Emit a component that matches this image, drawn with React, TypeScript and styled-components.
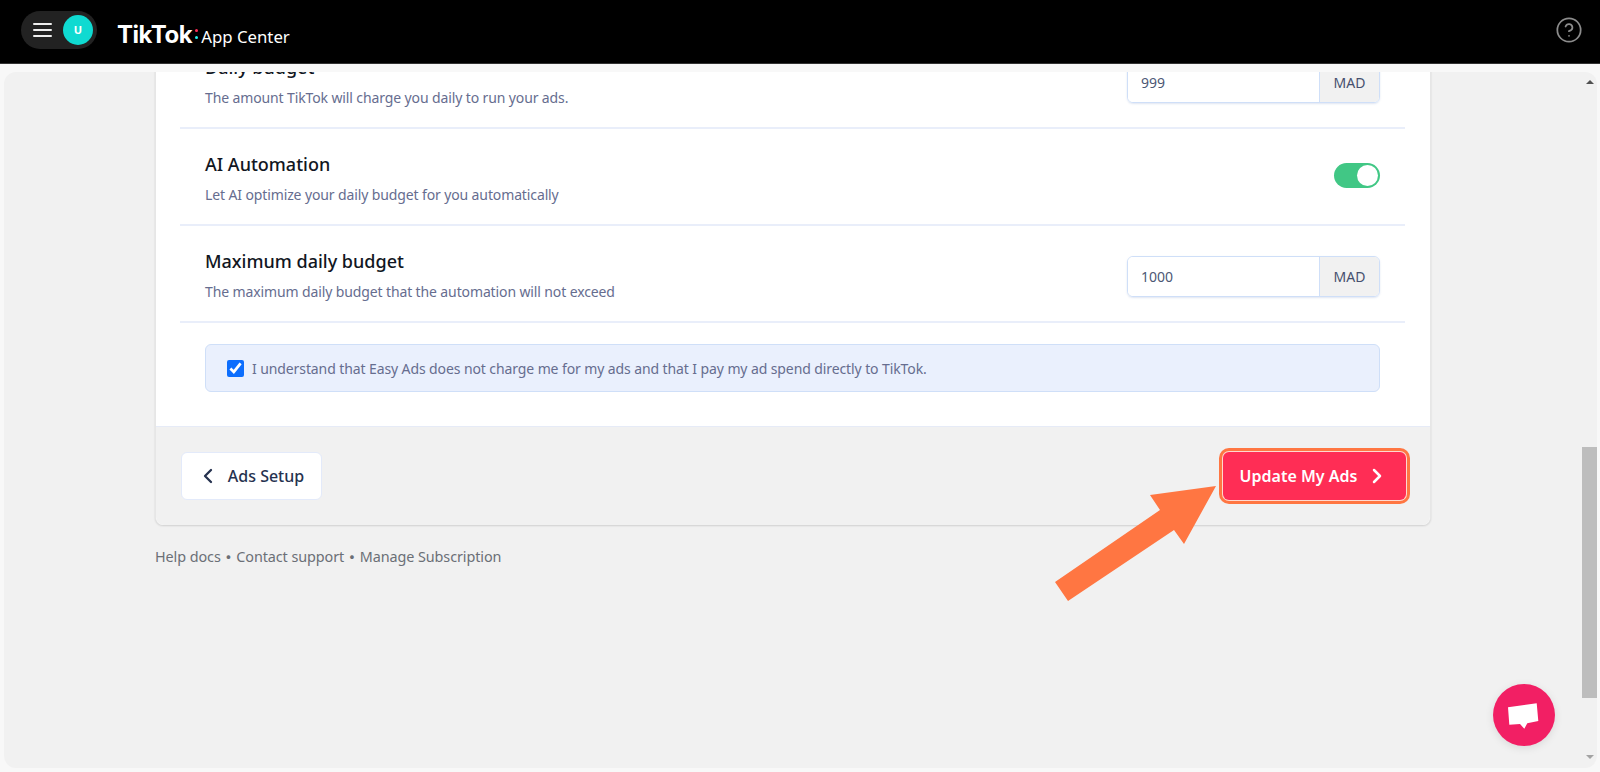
import React from "react";
import styled, { createGlobalStyle } from "styled-components";
import { CircleHelp, ChevronLeft, ChevronRight } from "lucide-react";

const Global = createGlobalStyle`
  html, body { margin: 0; padding: 0; height: 100%; overflow: hidden; background: #f8f8f8; }
  body { font-family: "Noto Sans", "Open Sans", Arial, sans-serif; }
  * { box-sizing: border-box; }
`;

const Page = styled.div`
  position: relative;
  width: 1600px;
  height: 772px;
  display: flex;
  flex-direction: column;
  overflow: hidden;
`;
const Header = styled.header`
  height: 64px;
  flex: none;
  background: #000;
  border-bottom: 1px solid #333;
  display: flex;
  align-items: center;
  padding: 0 17px 4px 21px;
`;
const MenuPill = styled.div`
  width: 76px;
  height: 38px;
  border-radius: 19px;
  background: #222;
  display: flex;
  align-items: center;
  padding: 0 4px 0 12px;
  justify-content: space-between;
`;
const Burger = styled.div`
  width: 19px;
  height: 14px;
  display: flex;
  flex-direction: column;
  justify-content: space-between;
  & > i { display: block; height: 2px; background: #eee; border-radius: 1px; }
`;
const Avatar = styled.div`
  width: 30px;
  height: 30px;
  border-radius: 50%;
  background: #0fdad1;
  color: #fff;
  display: flex;
  align-items: center;
  justify-content: center;
  font-size: 11px;
  font-weight: 700;
`;
const Logo = styled.div`
  margin-left: 20px;
  display: flex;
  align-items: baseline;
  color: #fff;
  font-family: Inter, sans-serif;
  margin-top: 9px;
`;
const LogoMark = styled.span`
  font-size: 24px;
  font-weight: 700;
  letter-spacing: -0.45px;
`;
const LogoDots = styled.span`
  display: inline-flex;
  flex-direction: column;
  gap: 4px;
  margin: 0 3px 0 3px;
  align-self: center;
  & > i { width: 3px; height: 3px; display: block; border-radius: 50%; }
  & > i:first-child { background: #fe2c55; }
  & > i:last-child { background: #25f4ee; }
`;
const LogoSub = styled.span`
  font-family: "Noto Sans", sans-serif;
  font-size: 16.8px;
  font-weight: 400;
`;
const HelpButton = styled.div`
  margin-left: auto;
  color: #8c8c8c;
  display: flex;
`;
const Body = styled.div`
  flex: 1;
  min-height: 0;
  padding: 8px 3px 4px 4px;
  display: flex;
`;
const Panel = styled.main`
  flex: 1;
  min-width: 0;
  background: #f1f1f1;
  border-radius: 12px;
  overflow: hidden;
  display: flex;
`;
const Scroller = styled.div`
  flex: 1;
  min-width: 0;
  overflow: hidden;
`;
const Column = styled.div`
  width: 1276px;
  margin: -40px auto 0;
`;
const Card = styled.section`
  background: #fff;
  border-radius: 0 0 8px 8px;
  box-shadow: 0 1px 2px rgba(0, 0, 0, 0.14);
  border-left: 1px solid #e6e6e6;
  border-right: 1px solid #e6e6e6;
`;
const CardBody = styled.div`
  padding: 0 25px 34px 24px;
`;
const Row = styled.div`
  height: 97px;
  border-bottom: 2px solid #e9eefa;
  padding: 3px 25px 0 25px;
  display: flex;
  align-items: center;
  justify-content: space-between;
`;
const RowText = styled.div`
  display: flex;
  flex-direction: column;
  gap: 9px;
`;
const RowTitle = styled.div`
  font-size: 18px;
  line-height: 24px;
  font-weight: 500;
  color: #111622;
`;
const RowDesc = styled.div`
  font-size: 14px;
  line-height: 20px;
  letter-spacing: -0.12px;
  color: #666d8f;
`;
const InputGroup = styled.div`
  width: 253px;
  height: 41px;
  margin-top: 2px;
  border: 1.5px solid #cfdff8;
  border-radius: 6px;
  display: flex;
  overflow: hidden;
  box-shadow: 0 1px 2px rgba(80, 110, 180, 0.18);
`;
const NumberInput = styled.input`
  flex: 1;
  min-width: 0;
  border: 0;
  outline: 0;
  padding: 0 13px;
  font: 14px "Noto Sans", sans-serif;
  color: #4d5875;
  background: #fff;
`;
const Addon = styled.div`
  width: 60px;
  background: #f1f1f1;
  border-left: 1.5px solid #cfdff8;
  display: flex;
  align-items: center;
  justify-content: center;
  font-size: 14px;
  color: #46506e;
`;
const Toggle = styled.div`
  width: 46px;
  height: 25px;
  margin-bottom: 5px;
  border-radius: 13px;
  background: #41c785;
  display: flex;
  align-items: center;
  justify-content: flex-end;
  padding: 0 2px;
  & > i { display: block; width: 21px; height: 21px; border-radius: 50%; background: #fff; }
`;
const Notice = styled.label`
  margin: 21px 25px 0 25px;
  height: 48px;
  border: 1.5px solid #cfdff8;
  border-radius: 6px;
  background: #eaf0fd;
  display: flex;
  align-items: center;
  padding: 0 21px;
  gap: 8px;
  font-size: 14px;
  letter-spacing: -0.1px;
  color: #666d8f;
`;
const Check = styled.input`
  width: 17px;
  height: 17px;
  margin: 0;
  accent-color: #0d6efd;
`;
const CardFooter = styled.div`
  height: 99px;
  background: #f1f1f1;
  border-top: 1px solid #e6ebf7;
  border-radius: 0 0 8px 8px;
  padding: 0 24px 0 25px;
  display: flex;
  align-items: center;
  justify-content: space-between;
`;
const BackButton = styled.button`
  width: 141px;
  height: 48px;
  background: #fff;
  border: 1.5px solid #e3eafa;
  border-radius: 6px;
  display: flex;
  align-items: center;
  justify-content: center;
  gap: 8px;
  font: 500 16px "Noto Sans", sans-serif;
  color: #26324f;
  padding: 0 3px 0 0;
`;
const PrimaryButton = styled.button`
  width: 183px;
  height: 48px;
  background: #ff2d55;
  border: 0;
  border-radius: 6px;
  box-shadow: 0 0 0 1px #ffd9cf, 0 0 0 4px #ff7642;
  display: flex;
  align-items: center;
  justify-content: center;
  gap: 8px;
  font: 600 16px "Noto Sans", sans-serif;
  color: #fff;
  padding: 0;
`;
const LinksRow = styled.nav`
  margin-top: 21px;
  font-size: 14.4px;
  line-height: 22px;
  letter-spacing: -0.08px;
  color: #6b6f76;
  display: flex;
`;
const Separator = styled.span`
  font-family: "Noto Sans CJK JP", sans-serif;
  font-weight: 700;
  width: 15.5px;
  text-align: center;
`;
const ScrollTrack = styled.div`
  width: 15px;
  flex: none;
  display: flex;
  flex-direction: column;
  align-items: center;
  padding: 8px 0 9px;
`;
const ArrowUp = styled.i`
  width: 0;
  height: 0;
  border: 4px solid transparent;
  border-top: 0;
  border-bottom: 4px solid #505050;
`;
const ArrowDown = styled.i`
  width: 0;
  height: 0;
  border: 4px solid transparent;
  border-bottom: 0;
  border-top: 4px solid #a3a3a3;
`;
const Thumb = styled.div`
  width: 100%;
  height: 251px;
  margin-top: auto;
  margin-bottom: 57px;
  background: #bdbdbd;
`;
const Annotation = styled.svg`
  position: absolute;
  left: 0;
  top: 0;
  pointer-events: none;
`;
const ChatButton = styled.div`
  position: absolute;
  left: 1493px;
  top: 684px;
  width: 62px;
  height: 62px;
  border-radius: 50%;
  background: #f21f64;
  box-shadow: 0 2px 8px rgba(0, 0, 0, 0.1);
`;

const BudgetInput = ({ value }: { value: string }) => (
  <InputGroup>
    <NumberInput defaultValue={value} />
    <Addon>MAD</Addon>
  </InputGroup>
);

const SettingRow = ({ title, desc, children }: { title: string; desc: string; children: React.ReactNode }) => (
  <Row>
    <RowText>
      <RowTitle>{title}</RowTitle>
      <RowDesc>{desc}</RowDesc>
    </RowText>
    {children}
  </Row>
);

export default function App() {
  return (
    <Page>
      <Global />
      <Header>
        <MenuPill>
          <Burger><i /><i /><i /></Burger>
          <Avatar>U</Avatar>
        </MenuPill>
        <Logo>
          <LogoMark>TikTok</LogoMark>
          <LogoDots><i /><i /></LogoDots>
          <LogoSub>App Center</LogoSub>
        </Logo>
        <HelpButton><CircleHelp size={28} strokeWidth={1.5} /></HelpButton>
      </Header>
      <Body>
        <Panel>
          <Scroller>
            <Column>
              <Card>
                <CardBody>
                  <SettingRow title="Daily budget" desc="The amount TikTok will charge you daily to run your ads.">
                    <BudgetInput value="999" />
                  </SettingRow>
                  <SettingRow title="AI Automation" desc="Let AI optimize your daily budget for you automatically">
                    <Toggle><i /></Toggle>
                  </SettingRow>
                  <SettingRow title="Maximum daily budget" desc="The maximum daily budget that the automation will not exceed">
                    <BudgetInput value="1000" />
                  </SettingRow>
                  <Notice>
                    <Check type="checkbox" defaultChecked />
                    I understand that Easy Ads does not charge me for my ads and that I pay my ad spend directly to TikTok.
                  </Notice>
                </CardBody>
                <CardFooter>
                  <BackButton><ChevronLeft size={24} strokeWidth={2.3} />Ads Setup</BackButton>
                  <PrimaryButton>Update My Ads<ChevronRight size={24} strokeWidth={2.5} /></PrimaryButton>
                </CardFooter>
              </Card>
              <LinksRow>
                <span>Help docs</span><Separator>・</Separator><span>Contact support</span><Separator>・</Separator><span>Manage Subscription</span>
              </LinksRow>
            </Column>
          </Scroller>
          <ScrollTrack>
            <ArrowUp />
            <Thumb />
            <ArrowDown />
          </ScrollTrack>
        </Panel>
      </Body>
      <Annotation width="1600" height="772" viewBox="0 0 1600 772">
        <polygon fill="#ff7642" points="1216,486 1150,495 1160,510 1055,582 1068,601 1174,530 1184,544" />
      </Annotation>
      <ChatButton>
        <svg width="62" height="62" viewBox="0 0 62 62">
          <polygon fill="#fff" points="15,23.3 43.7,19.3 45.3,37 34.3,39.3 31.3,44.7 27,40 16.3,40.7" />
        </svg>
      </ChatButton>
    </Page>
  );
}
